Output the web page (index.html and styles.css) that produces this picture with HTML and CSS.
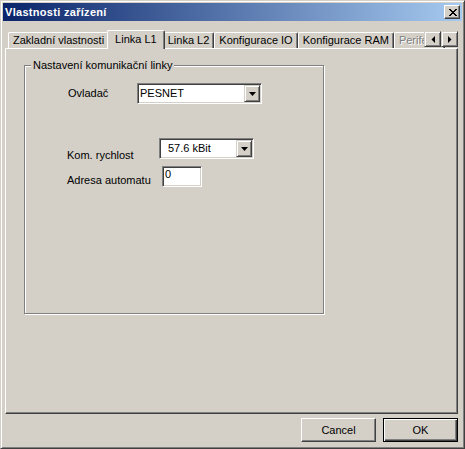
FILE: index.html
```html
<!DOCTYPE html>
<html lang="cs">
<head>
<meta charset="utf-8">
<title>Vlastnosti zařízení</title>
<link rel="stylesheet" href="styles.css">
</head>
<body>
<div class="window">
  <div class="titlebar">
    <span class="title">Vlastnosti zařízení</span>
    <span class="close">
      <svg width="8" height="7" viewBox="0 0 8 7"><path fill="#000" d="M0 0h2v1H0z M1 1h2v1H1z M2 2h2v1H2z M3 3h2v1H3z M4 4h2v1H4z M5 5h2v1H5z M6 6h2v1H6z M6 0h2v1H6z M5 1h2v1H5z M4 2h2v1H4z M2 4h2v1H2z M1 5h2v1H1z M0 6h2v1H0z"/></svg>
    </span>
  </div>
  <div class="body">
    <div class="tabstrip">
      <div class="tab">Zakladní vlastnosti</div>
      <div class="tab selected">Linka L1</div>
      <div class="tab">Linka L2</div>
      <div class="tab">Konfigurace IO</div>
      <div class="tab">Konfigurace RAM</div>
      <div class="tab disabled">Periferie</div>
      <div class="spin">
        <span class="spin-btn"><svg width="4" height="7" viewBox="0 0 4 7"><path fill="#000" d="M4 0v7L0.5 3.5z"/></svg></span>
        <span class="spin-btn"><svg width="4" height="7" viewBox="0 0 4 7"><path fill="#000" d="M0 0v7l3.5-3.5z"/></svg></span>
      </div>
    </div>
    <div class="panel">
      <div class="group">
        <div class="legend">Nastavení komunikační linky</div>
        <div class="row row-driver">
          <span class="label label-driver">Ovladač</span>
          <div class="combo combo-driver">
            <span class="combo-text">PESNET</span>
            <span class="drop"><svg width="7" height="4" viewBox="0 0 7 4"><path fill="#000" d="M0 0h7L3.5 4z"/></svg></span>
          </div>
        </div>
        <div class="row row-speed">
          <span class="label label-wide label-speed">Kom. rychlost</span>
          <div class="combo combo-speed">
            <span class="combo-text combo-text-indent">57.6 kBit</span>
            <span class="drop"><svg width="7" height="4" viewBox="0 0 7 4"><path fill="#000" d="M0 0h7L3.5 4z"/></svg></span>
          </div>
        </div>
        <div class="row row-addr">
          <span class="label label-wide label-addr">Adresa automatu</span>
          <div class="edit">0</div>
        </div>
      </div>
    </div>
    <div class="buttons">
      <div class="btn">Cancel</div>
      <div class="btn btn-default">OK</div>
    </div>
  </div>
</div>
</body>
</html>
```

FILE: styles.css
```css
html, body {
  margin: 0;
  padding: 0;
  background: #d4d0c8;
}

body {
  font-family: "Liberation Sans", Arial, sans-serif;
  font-size: 11px;
  line-height: 13px;
  color: #000;
}

.window {
  width: 465px;
  height: 449px;
  box-sizing: border-box;
  display: flex;
  flex-direction: column;
  background: #d4d0c8;
  border: 1px solid;
  border-color: #d4d0c8 #404040 #404040 #d4d0c8;
  box-shadow: inset 1px 1px #ffffff, inset -1px -1px #808080;
  padding: 2px;
}

.titlebar {
  height: 18px;
  flex: none;
  display: flex;
  align-items: center;
  justify-content: space-between;
  background: linear-gradient(to right, #0a246a, #a6caf0);
  padding: 0 2px 0 2px;
}

.title {
  color: #fff;
  font-weight: bold;
  font-size: 11px;
  letter-spacing: 0.3px;
  line-height: 18px;
}

.close {
  width: 16px;
  height: 14px;
  box-sizing: border-box;
  display: flex;
  align-items: center;
  justify-content: center;
  background: #d4d0c8;
  border: 1px solid;
  border-color: #ffffff #404040 #404040 #ffffff;
  box-shadow: inset -1px -1px #808080;
}

.close svg {
  display: block;
  margin-left: 1px;
}

.body {
  flex: 1;
  display: flex;
  flex-direction: column;
  margin: 0 4px 0 2px;
  min-height: 0;
}

.tabstrip {
  position: relative;
  height: 18px;
  margin-top: 9px;
  padding-left: 3px;
  display: flex;
  align-items: flex-end;
  flex: none;
}

.tab {
  height: 16px;
  box-sizing: border-box;
  padding: 1px 4px 0 4px;
  border-top: 1px solid #fff;
  border-left: 1px solid #fff;
  border-right: 1px solid #404040;
  border-top-left-radius: 2px;
  border-top-right-radius: 2px;
  box-shadow: inset -1px 0 #808080;
  white-space: nowrap;
  background: #d4d0c8;
}

.tab.selected {
  position: relative;
  z-index: 1;
  height: 19px;
  margin: 0 -2px -1px -2px;
  padding: 2px 7px 0 7px;
}

.tab.disabled {
  color: #808080;
  text-shadow: 1px 1px #fff;
}

.spin {
  position: absolute;
  right: 0;
  top: 1px;
  display: flex;
  z-index: 2;
}

.spin-btn {
  width: 17px;
  height: 16px;
  box-sizing: border-box;
  display: flex;
  align-items: center;
  justify-content: center;
  background: #d4d0c8;
  border: 1px solid;
  border-color: #d4d0c8 #404040 #404040 #d4d0c8;
  box-shadow: inset 1px 1px #fff, inset -1px -1px #808080;
}

.spin-btn svg {
  display: block;
}

.panel {
  flex: 1;
  min-height: 0;
  box-sizing: border-box;
  border: 1px solid;
  border-color: #fff #404040 #404040 #fff;
  box-shadow: inset -1px -1px #808080;
  padding: 16px 0 0 18px;
}

.group {
  width: 300px;
  height: 249px;
  box-sizing: border-box;
  border: 1px solid #808080;
  box-shadow: inset 1px 1px #fff, 1px 1px #fff;
}

.legend {
  width: fit-content;
  margin: -7px 0 0 6px;
  padding: 0 2px;
  background: #d4d0c8;
  white-space: nowrap;
}

.row {
  display: flex;
  height: 21px;
}

.row-driver {
  margin-top: 11px;
  align-items: center;
}

.row-speed {
  margin-top: 34px;
}

.row-addr {
  margin-top: 7px;
}

.label {
  flex: none;
  white-space: nowrap;
}

.label-driver {
  margin-left: 43px;
  width: 69px;
}

.label-wide {
  margin-left: 42px;
}

.label-speed {
  width: 92px;
  margin-top: 11px;
}

.label-addr {
  width: 95px;
  margin-top: 8px;
}

.combo, .edit {
  box-sizing: border-box;
  height: 21px;
  background: #fff;
  border: 1px solid;
  border-color: #808080 #fff #fff #808080;
  box-shadow: inset 1px 1px #404040, inset -1px -1px #d4d0c8;
  padding: 1px;
}

.combo {
  display: flex;
  align-items: center;
}

.combo-driver {
  width: 125px;
}

.combo-speed {
  width: 95px;
}

.combo-text {
  flex: 1;
  padding-left: 1px;
  white-space: nowrap;
}

.combo-text-indent {
  padding-left: 7px;
}

.drop {
  width: 16px;
  height: 17px;
  box-sizing: border-box;
  display: flex;
  align-items: center;
  justify-content: center;
  background: #d4d0c8;
  border: 1px solid;
  border-color: #d4d0c8 #404040 #404040 #d4d0c8;
  box-shadow: inset 1px 1px #fff, inset -1px -1px #808080;
}

.drop svg {
  display: block;
}

.edit {
  width: 40px;
  padding: 1px 2px;
}

.buttons {
  flex: none;
  display: flex;
  justify-content: flex-end;
  gap: 7px;
  margin: 4px 0 4px 0;
}

.btn {
  width: 75px;
  height: 24px;
  box-sizing: border-box;
  display: flex;
  align-items: center;
  justify-content: center;
  background: #d4d0c8;
  border: 1px solid;
  border-color: #fff #404040 #404040 #fff;
  box-shadow: inset -1px -1px #808080;
}

.btn-default {
  border-color: #000;
  box-shadow: inset 1px 1px #fff, inset -1px -1px #404040, inset -2px -2px #808080;
}
```
